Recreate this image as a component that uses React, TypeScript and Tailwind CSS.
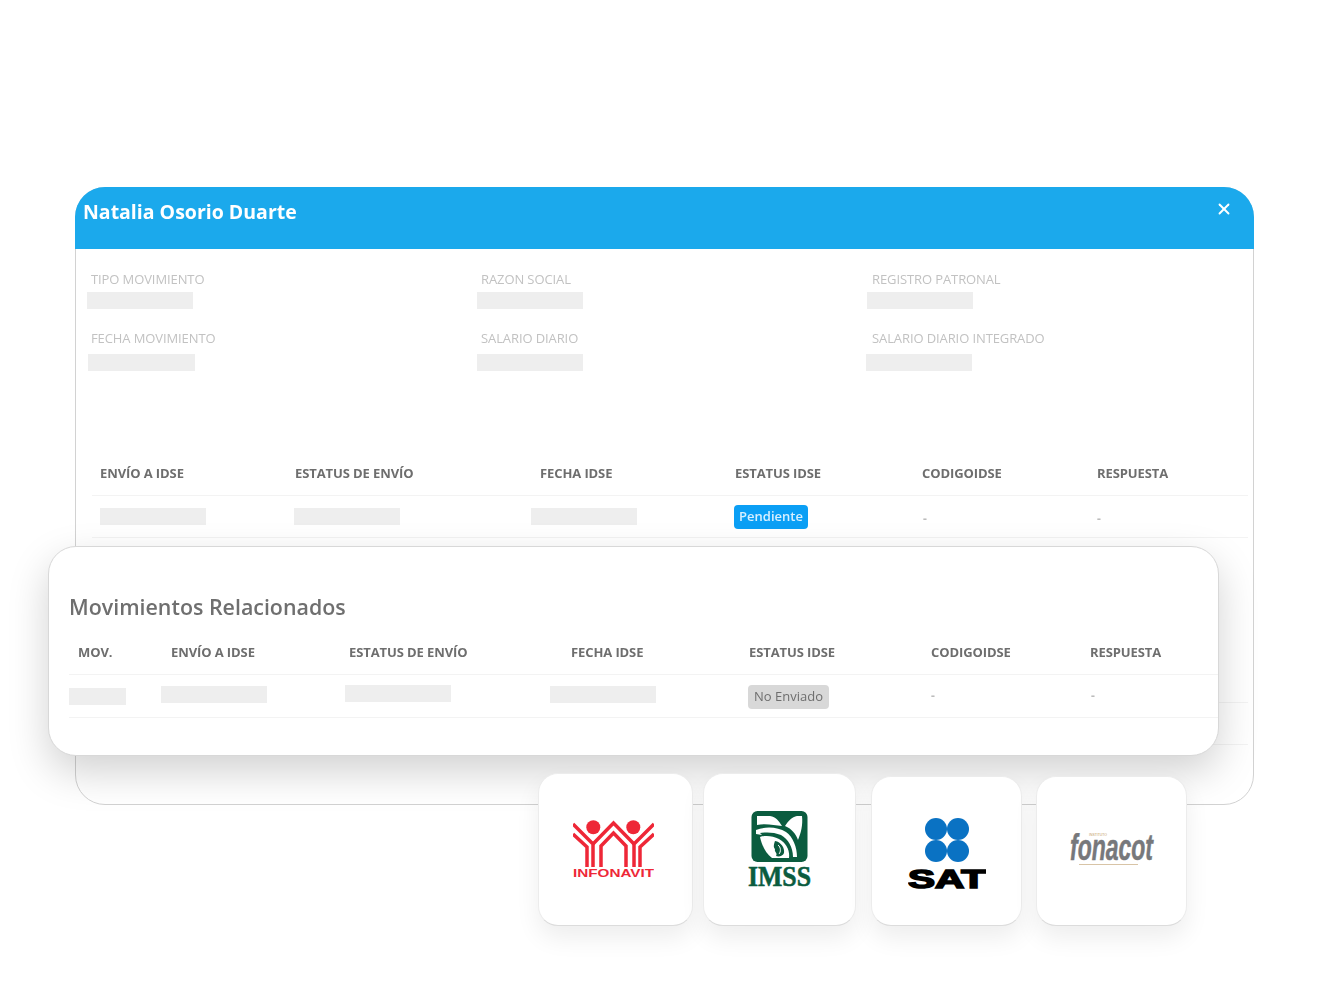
import React from 'react'
import { X } from 'lucide-react'

const Bar = ({ className = '' }: { className?: string }) => (
    <div className={`h-[17px] bg-[#eeeeee] ${className}`} />
)

const Field = ({ label, barClass }: { label: string, barClass: string }) => (
    <div className="flex flex-col">
        <span className="h-[18px] text-[13px] leading-[18px] tracking-[-0.1px] text-[#c2c2c2] blur-[0.6px]">{label}</span>
        <Bar className={barClass} />
    </div>
)

const Th = ({ children }: { children: React.ReactNode }) => (
    <span className="text-[13px] font-bold tracking-[-0.1px] text-[#6e6e6e] blur-[0.6px]">{children}</span>
)

const Dash = ({ className = '' }: { className?: string }) => (
    <span className={`text-[12px] font-bold text-[#bcbcbc] blur-[0.5px] ${className}`}>-</span>
)

const Tile = ({ className, children }: { className: string, children: React.ReactNode }) => (
    <div className={`flex items-center justify-center rounded-[20px] border border-[#ececec] border-b-[#dcdcdc] bg-white shadow-[0_12px_24px_rgba(0,0,0,0.07)] ${className}`}>
        {children}
    </div>
)

const InfonavitLogo = () => (
    <svg width="81" height="64" viewBox="0 0 81 64" className="-mb-[6px] -ml-[4px] -mt-[2px]">
        <g fill="none" stroke="#ee2737" strokeWidth="3.5" strokeLinejoin="miter">
            <path d="M0 4 L20 24 V47 M0 14 L14 27 V47" />
            <path d="M81 4 L61 24 V47 M81 14 L67 27 V47" />
            <path d="M20 24 L40.5 3 L61 24" />
            <path d="M28 47 V26 L40.5 13 L53 26 V47" />
        </g>
        <circle cx="20.3" cy="7.3" r="7" fill="#ee2737" />
        <circle cx="60.3" cy="7.3" r="7" fill="#ee2737" />
        <text x="0" y="57" textLength="81" lengthAdjust="spacingAndGlyphs" fontFamily="'Liberation Sans', sans-serif" fontWeight="700" fontSize="10" fill="#ee2737">INFONAVIT</text>
    </svg>
)

const ImssLogo = () => (
    <svg width="83" height="84" viewBox="-10 0 83 84" className="-mb-[8px] -mt-[1px]">
        <rect x="3.5" y="0" width="56" height="51" rx="6" fill="#0b5c3f" />
        {/* top lobes */}
        <path d="M9 5 H22 C28 6 31 10 34 15 C26 14 17 12 9 14 Z" fill="#ffffff" />
        <path d="M37 15 C40 10 44 6 49 5 H54 C55 14 53 22 50 29 C48 23 44 18 37 15 Z" fill="#ffffff" />
        {/* eagle band and arc */}
        <path d="M8 19 C18 15 30 16 38 21 C45 26 49 36 49 46 H45 C45 36 40 28 33 24 C26 21 18 21 12 22 L14 24 L8 23 Z" fill="#ffffff" />
        {/* face */}
        <path d="M12 26 C18 24 25 25 31 28 C38 32 42 39 41 47 H24 C18 43 14 35 12 26 Z" fill="#ffffff" />
        <path d="M27 30 C33 31 37 37 36 42 C35 45 31 46 28 45 C30 42 26 41 27 38 C25 36 26 33 27 30 Z" fill="#0b5c3f" />
        <path d="M30 34 C33 36 33 41 31 43" fill="none" stroke="#ffffff" strokeWidth="1" />
        <text x="0" y="75" textLength="63" lengthAdjust="spacingAndGlyphs" fontFamily="'Liberation Serif', serif" fontWeight="700" fontSize="30" stroke="#0b5c3f" strokeWidth="0.6" fill="#0b5c3f">IMSS</text>
    </svg>
)

const SatLogo = () => (
    <svg width="78" height="78" viewBox="0 0 78 78" className="-mb-[8px] mt-[3px]">
        <circle cx="28" cy="11" r="11" fill="#0a72c3" />
        <circle cx="50" cy="11" r="11" fill="#0a72c3" />
        <circle cx="28" cy="33" r="11" fill="#0a72c3" />
        <circle cx="50" cy="33" r="11" fill="#0a72c3" />
        <text x="0" y="69.5" textLength="78" lengthAdjust="spacingAndGlyphs" fontFamily="'Liberation Sans', sans-serif" fontWeight="700" fontSize="26" stroke="#000000" strokeWidth="1.6" fill="#000000">SAT</text>
    </svg>
)

const FonacotLogo = () => (
    <svg width="144" height="44" viewBox="0 0 144 44" className="-mb-[10px] -mr-[60px] -mt-[2px] shrink-0">
        <text x="19" y="3" textLength="18" lengthAdjust="spacingAndGlyphs" fontFamily="'Liberation Sans', sans-serif" fontSize="3.2" fill="#c19a62">INSTITUTO</text>
        <text x="0" y="27" textLength="83" lengthAdjust="spacingAndGlyphs" fontFamily="'Liberation Sans', sans-serif" fontWeight="700" fontStyle="italic" fontSize="37" stroke="#77787b" strokeWidth="0.5" fill="#77787b">fonacot</text>
        <rect x="9" y="31" width="59" height="1" fill="#d8c4a6" />
    </svg>
)

export default function App() {
    return (
        <div className="min-h-[998px] bg-white pl-[75px] pt-[187px] font-['Open_Sans',sans-serif]">
            {/* main card */}
            <div className="relative h-[618px] w-[1179px] rounded-[30px] border border-[#d2d2d2] bg-white">
                <div className="-m-px flex h-[62px] items-start justify-between rounded-t-[30px] bg-[#1ba9ec] pl-[8px] pr-[21px]">
                    <span className="mt-[11px] text-[19.5px] font-bold leading-[28px] text-white blur-[0.5px]">Natalia Osorio Duarte</span>
                    <X size={18} strokeWidth={2.5} className="mt-[13px] text-white" />
                </div>

                <div className="grid grid-cols-[390px_391px_1fr] gap-y-[20px] pl-[15px] pt-[22px]">
                    <Field label="TIPO MOVIMIENTO" barClass="mt-[4px] -ml-[4px] w-[106px]" />
                    <Field label="RAZON SOCIAL" barClass="mt-[4px] -ml-[4px] w-[106px]" />
                    <Field label="REGISTRO PATRONAL" barClass="mt-[4px] -ml-[5px] w-[106px]" />
                    <Field label="FECHA MOVIMIENTO" barClass="mt-[7px] -ml-[3px] w-[107px]" />
                    <Field label="SALARIO DIARIO" barClass="mt-[7px] -ml-[4px] w-[106px]" />
                    <Field label="SALARIO DIARIO INTEGRADO" barClass="mt-[7px] -ml-[6px] w-[106px]" />
                </div>

                <div className="ml-[16px] mt-[81px] w-[1156px]">
                    <div className="grid h-[44px] grid-cols-[195px_245px_195px_187px_175px_1fr] items-center border-b border-[#f3f3f3] pl-[8px]">
                        <Th>ENVÍO A IDSE</Th>
                        <Th>ESTATUS DE ENVÍO</Th>
                        <Th>FECHA IDSE</Th>
                        <Th>ESTATUS IDSE</Th>
                        <Th>CODIGOIDSE</Th>
                        <Th>RESPUESTA</Th>
                    </div>
                    <div className="grid h-[42px] grid-cols-[195px_245px_195px_187px_175px_1fr] items-center border-b border-[#f3f3f3] pl-[8px]">
                        <Bar className="w-[106px]" />
                        <Bar className="-ml-[1px] w-[106px]" />
                        <Bar className="-ml-[9px] w-[106px]" />
                        <span className="-ml-[1px] flex h-[24px] w-[74px] items-center justify-center rounded-[4px] bg-[#0b9ff5] text-[13px] font-semibold text-[#d8f0ff] blur-[0.4px]">Pendiente</span>
                        <Dash className="ml-[1px] mt-[4px]" />
                        <Dash className="mt-[4px]" />
                    </div>
                    <div className="h-[165px] border-b border-[#f3f3f3]" />
                    <div className="h-[42px] border-b border-[#f3f3f3]" />
                </div>

                {/* related movements card, lies over the main card */}
                <div className="absolute left-[-28px] top-[358px] h-[210px] w-[1171px] rounded-[28px] border border-[#d8d8d8] bg-white pl-[20px] shadow-[0_16px_40px_rgba(0,0,0,0.18)]">
                    <h2 className="mt-[44px] h-[32px] text-[21.4px] font-semibold leading-[32px] text-[#6f6f6f] blur-[0.5px]">Movimientos Relacionados</h2>
                    <div className="mt-[8px] grid h-[44px] grid-cols-[93px_178px_222px_178px_182px_159px_1fr] items-center border-b border-[#f3f3f3] pl-[9px]">
                        <Th>MOV.</Th>
                        <Th>ENVÍO A IDSE</Th>
                        <Th>ESTATUS DE ENVÍO</Th>
                        <Th>FECHA IDSE</Th>
                        <Th>ESTATUS IDSE</Th>
                        <Th>CODIGOIDSE</Th>
                        <Th>RESPUESTA</Th>
                    </div>
                    <div className="grid h-[43px] grid-cols-[93px_178px_222px_178px_182px_159px_1fr] items-center border-b border-[#f3f3f3] pl-[9px]">
                        <Bar className="-ml-[9px] w-[57px]" />
                        <Bar className="-ml-[10px] -mt-[4px] w-[106px]" />
                        <Bar className="-ml-[4px] -mt-[6px] w-[106px]" />
                        <Bar className="-ml-[21px] -mt-[4px] w-[106px]" />
                        <span className="-ml-[1px] mt-[2px] flex h-[24px] w-[81px] items-center justify-center rounded-[4px] bg-[#d8d8d8] text-[13px] font-medium text-[#6e6e6e] blur-[0.4px]">No Enviado</span>
                        <Dash />
                        <Dash className="ml-[1px]" />
                    </div>
                </div>

                {/* logo tiles, also over the main card */}
                <div className="absolute left-[462px] top-[585px] flex items-end">
                    <Tile className="h-[153px] w-[155px]"><InfonavitLogo /></Tile>
                    <Tile className="ml-[10px] h-[153px] w-[153px]"><ImssLogo /></Tile>
                    <Tile className="ml-[15px] h-[150px] w-[151px]"><SatLogo /></Tile>
                    <Tile className="ml-[14px] h-[150px] w-[151px]"><FonacotLogo /></Tile>
                </div>
            </div>
        </div>
    )
}
